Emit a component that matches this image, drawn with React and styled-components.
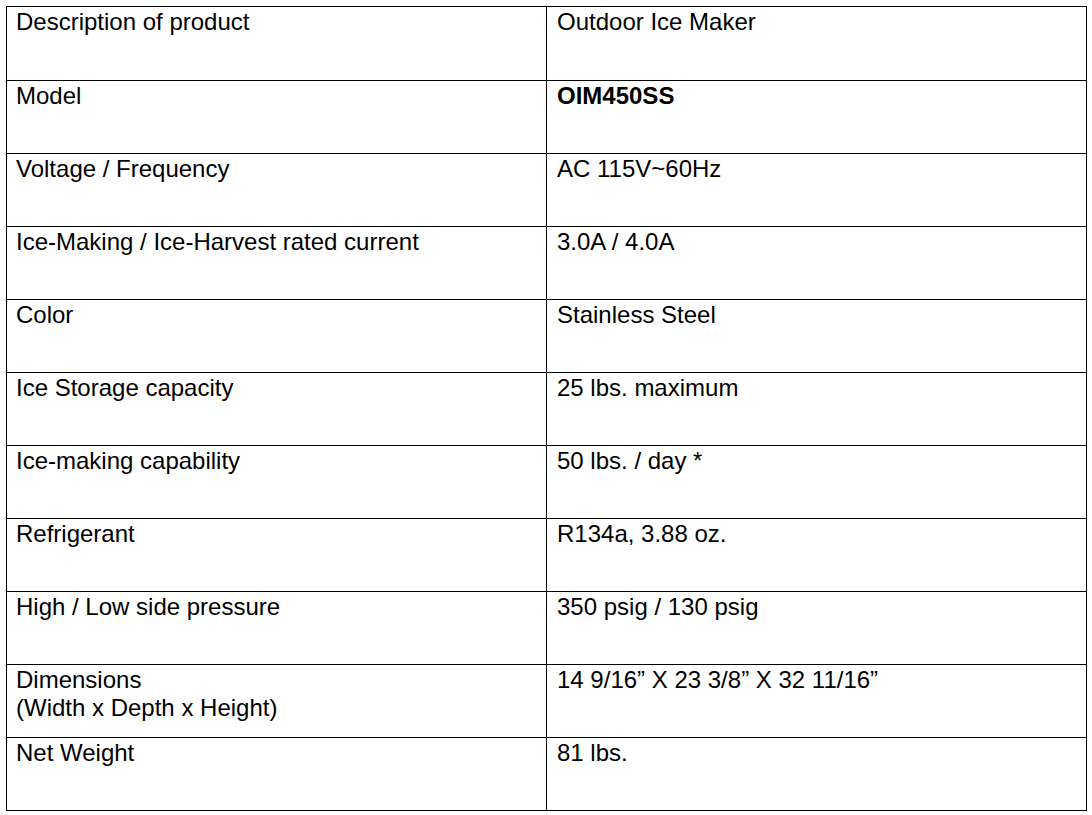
import React from 'react'
import styled, { createGlobalStyle } from 'styled-components'

const GlobalStyle = createGlobalStyle`
body {
  margin: 0;
  background: #fff;
  font-family: "Liberation Sans", Arial, sans-serif;
}
`

const Page = styled.div`
padding: 6px 0 0 6px;
`

const Table = styled.div`
display: grid;
grid-template-columns: 539px 540px;
width: 1081px;
box-sizing: border-box;
border: 1px solid #000;
`

const Cell = styled.div`
box-sizing: border-box;
height: ${p => (p.$first ? 74 : p.$last ? 72 : 73)}px;
border-bottom: ${p => (p.$last ? 'none' : '1px solid #000')};
border-left: ${p => (p.$right ? '1px solid #000' : 'none')};
padding: 1px 0 0 ${p => (p.$right ? 10 : 9)}px;
font-size: 24px;
line-height: 28px;
color: #000;
font-weight: ${p => (p.$bold ? 700 : 400)};
`

const rows = [
  ['Description of product', 'Outdoor Ice Maker'],
  ['Model', 'OIM450SS', true],
  ['Voltage / Frequency', 'AC 115V~60Hz'],
  ['Ice-Making / Ice-Harvest rated current', '3.0A / 4.0A'],
  ['Color', 'Stainless Steel'],
  ['Ice Storage capacity', '25 lbs. maximum'],
  ['Ice-making capability', '50 lbs. / day *'],
  ['Refrigerant', 'R134a, 3.88 oz.'],
  ['High / Low side pressure', '350 psig / 130 psig'],
  [['Dimensions', '(Width x Depth x Height)'], '14 9/16\u201d X 23 3/8\u201d X 32 11/16\u201d'],
  ['Net Weight', '81 lbs.'],
]

const App = () => {
  return (
    <>
      <GlobalStyle />
      <Page>
        <Table>
          {rows.map(([label, value, bold], i) => {
            const first = i === 0
            const last = i === rows.length - 1
            return (
              <React.Fragment key={i}>
                <Cell $first={first} $last={last}>
                  {Array.isArray(label)
                    ? label.map((l, j) => <div key={j}>{l}</div>)
                    : label}
                </Cell>
                <Cell $first={first} $last={last} $right $bold={bold}>
                  {value}
                </Cell>
              </React.Fragment>
            )
          })}
        </Table>
      </Page>
    </>
  )
}

export default App
